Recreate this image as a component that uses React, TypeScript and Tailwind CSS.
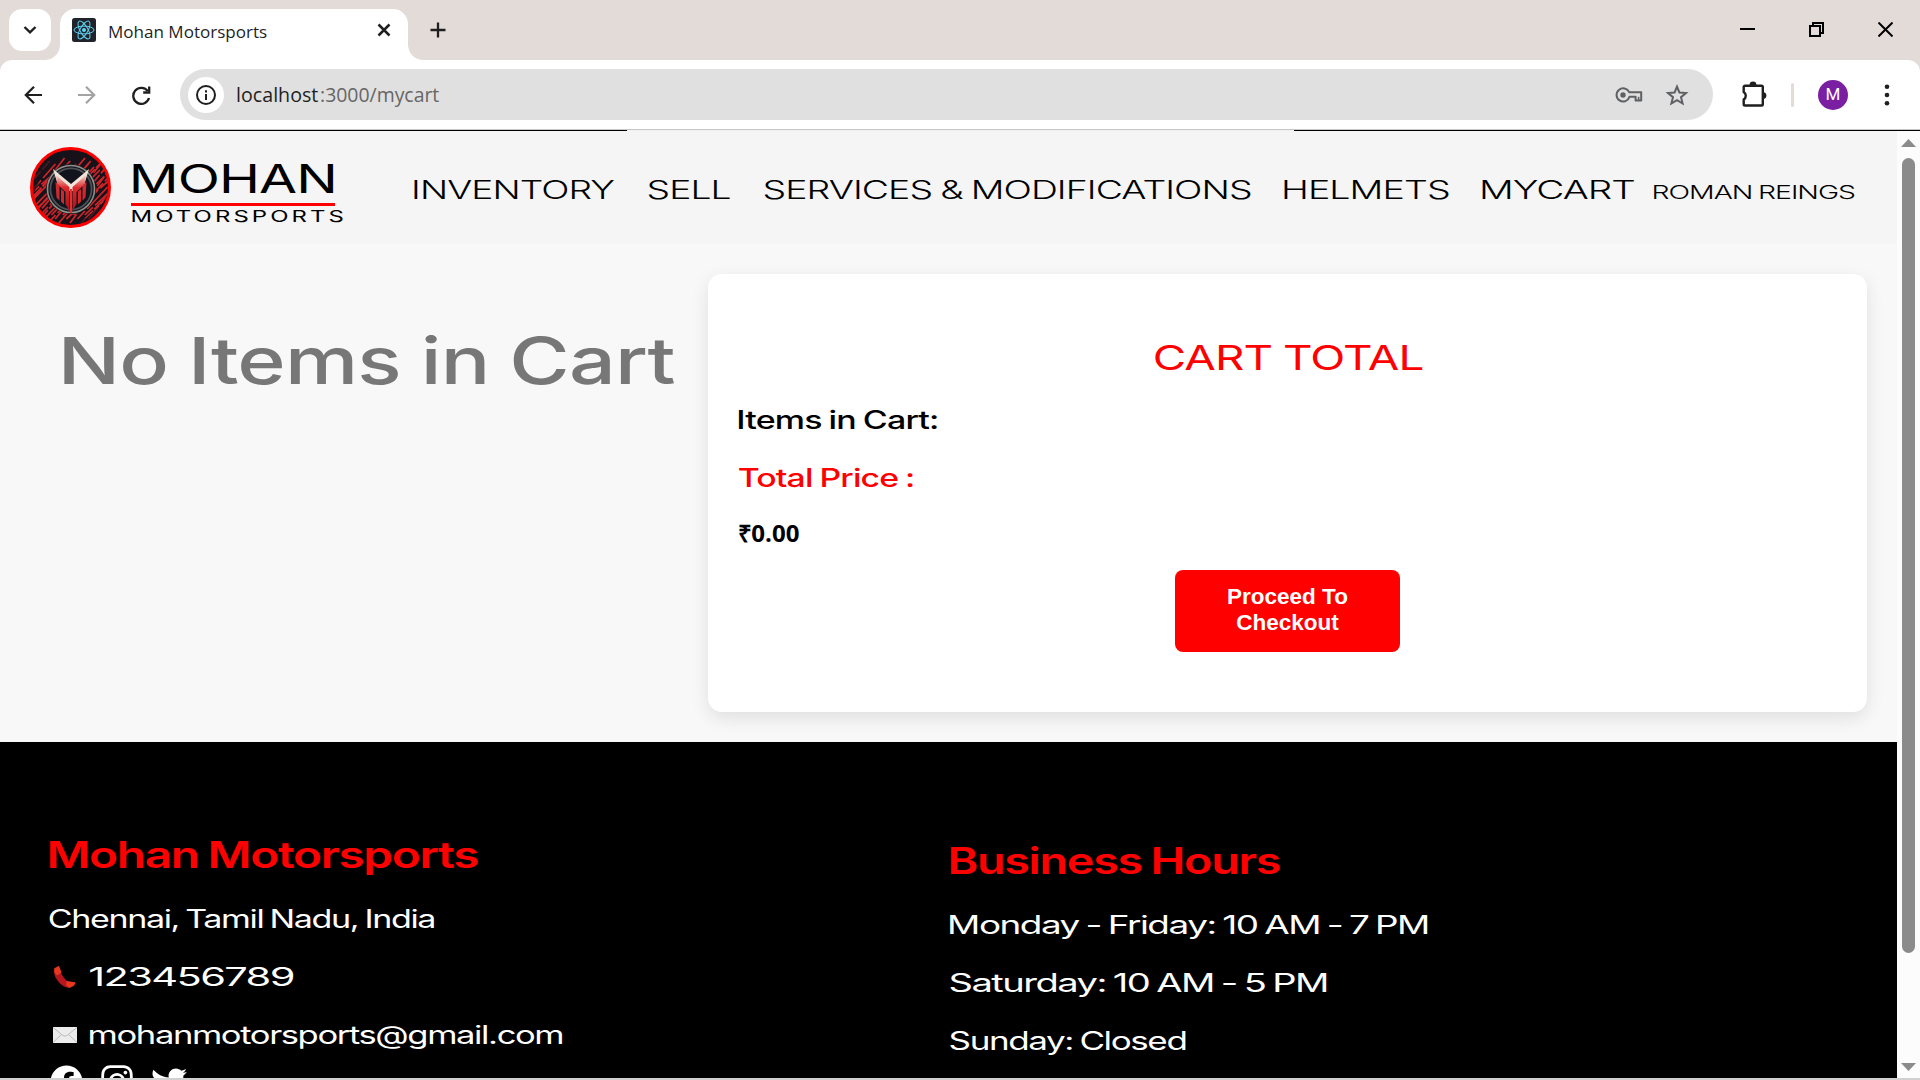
import { useLayoutEffect, useRef, useState } from "react";
import { FaFacebook, FaInstagram, FaTwitter } from "react-icons/fa";

/* Text stretched horizontally so that its ink fills the width of its box. */
function Wide({ text, box, className }: { text: string; box: string; className?: string }) {
  const outer = useRef<HTMLSpanElement>(null);
  const [transform, setTransform] = useState("none");
  useLayoutEffect(() => {
    const el = outer.current;
    const ctx = document.createElement("canvas").getContext("2d");
    if (!el || !ctx) return;
    const cs = getComputedStyle(el);
    ctx.font = `${cs.fontWeight} ${cs.fontSize} ${cs.fontFamily}`;
    if (cs.letterSpacing !== "normal") ctx.letterSpacing = cs.letterSpacing;
    ctx.wordSpacing = cs.wordSpacing;
    const m = ctx.measureText(text);
    const ink = m.actualBoundingBoxRight + m.actualBoundingBoxLeft;
    const k = (el.clientWidth - 1) / ink;
    setTransform(`translateX(${m.actualBoundingBoxLeft * k + 1}px) scaleX(${k})`);
  }, [text]);
  return (
    <span ref={outer} className={`block shrink-0 whitespace-nowrap ${box} ${className ?? ""}`}>
      <span className="inline-block origin-left align-top" style={{ transform }}>
        {text}
      </span>
    </span>
  );
}

function ReactMark() {
  return (
    <svg viewBox="0 0 24 24" className="size-6 shrink-0">
      <rect width="24" height="24" rx="2.5" fill="#20232a" />
      <g fill="none" stroke="#5ed3f3" strokeWidth="1">
        <ellipse cx="12" cy="12" rx="10" ry="3.9" />
        <ellipse cx="12" cy="12" rx="10" ry="3.9" transform="rotate(60 12 12)" />
        <ellipse cx="12" cy="12" rx="10" ry="3.9" transform="rotate(120 12 12)" />
      </g>
      <circle cx="12" cy="12" r="2" fill="#5ed3f3" />
    </svg>
  );
}

function TabStrip() {
  return (
    <div className="flex h-[60px] items-start bg-[#e3dbd8] pt-[9px]">
      <div className="ml-[9px] flex size-[42px] items-center justify-center rounded-[13px] bg-white">
        <svg width="14" height="10" viewBox="0 0 14 10" fill="none" stroke="#1f1f1f" strokeWidth="2.4">
          <path d="M1.5 2 7 7.4 12.5 2" />
        </svg>
      </div>
      <div className="relative ml-[9px] flex h-[51px] w-[348px] items-start rounded-t-[15px] bg-white pl-3">
        <span className="absolute bottom-0 left-[-15px] size-[15px] bg-[radial-gradient(circle_at_0_0,transparent_14.5px,#fff_15.2px)]" />
        <span className="absolute right-[-15px] bottom-0 size-[15px] bg-[radial-gradient(circle_at_100%_0,transparent_14.5px,#fff_15.2px)]" />
        <div className="mt-[9px]"><ReactMark /></div>
        <Wide text="Mohan Motorsports" box="w-[159px] ml-[12px]" className="mt-[9px] font-['Open_Sans'] text-[17px]/[28px] text-[#1f1f1f]" />
        <svg width="14" height="14" viewBox="0 0 14 14" className="mt-[14px] ml-[110px]" stroke="#1f1f1f" strokeWidth="2.5">
          <path d="M1.5 1.5l11 11M12.5 1.5l-11 11" />
        </svg>
      </div>
      <svg width="16" height="16" viewBox="0 0 16 16" className="mt-[13px] ml-[22px]" stroke="#1f1f1f" strokeWidth="2.3">
        <path d="M8 .5v15M.5 8h15" />
      </svg>
      <div className="ml-auto flex gap-[54px] pt-[13px] pr-[27px]">
        <svg width="15" height="15" viewBox="0 0 15 15" stroke="#000" strokeWidth="2"><path d="M0 7h15" /></svg>
        <svg width="15" height="15" viewBox="0 0 15 15" fill="none" stroke="#000" strokeWidth="2">
          <path d="M1 4h10v10H1zM4 4V1h10v10h-3" />
        </svg>
        <svg width="15" height="15" viewBox="0 0 15 15" stroke="#000" strokeWidth="2"><path d="M.5.5l14 14M14.5.5l-14 14" /></svg>
      </div>
    </div>
  );
}

function Toolbar() {
  return (
    <div className="h-[69px] bg-[#e3dbd8]">
      <div className="flex h-full items-center rounded-t-[12px] bg-white">
        <svg width="18" height="18" viewBox="0 0 18 18" className="mt-[1px] ml-[24px]" fill="none" stroke="#1f1f1f" strokeWidth="2.2">
          <path d="M18 9H2M10 .8 1.8 9l8.2 8.2" />
        </svg>
        <svg width="18" height="18" viewBox="0 0 18 18" className="mt-[1px] ml-[36px]" fill="none" stroke="#a3a3a3" strokeWidth="2.2">
          <path d="M0 9h16M8 .8 16.2 9 8 17.2" />
        </svg>
        <svg width="19" height="19" viewBox="0 0 19 19" className="mt-[1px] ml-[36px]" fill="none" stroke="#1f1f1f" strokeWidth="2.3">
          <path d="M15.8 5.2A8 8 0 1 0 17 12" />
          <path d="M17.2.5v6h-6" />
        </svg>
        <div className="ml-[29px] flex h-[51px] w-[1533px] items-center rounded-full bg-[#e0e0e0]">
          <div className="ml-[8px] flex size-9 items-center justify-center rounded-full bg-white">
            <svg width="20" height="20" viewBox="0 0 20 20" fill="none" stroke="#1f1f1f" strokeWidth="2">
              <circle cx="10" cy="10" r="9" />
              <path d="M10 9v6M10 5.2v2.2" />
            </svg>
          </div>
          <Wide text="localhost" box="w-[82px] ml-[12px]" className="mb-[1px] font-['Open_Sans'] text-[20.5px]/[30px] text-[#1f1f1f]" />
          <Wide text=":3000/mycart" box="w-[119px] ml-[2px]" className="mb-[1px] font-['Open_Sans'] text-[20.5px]/[30px] text-[#666]" />
          <svg width="28" height="18" viewBox="0 0 28 18" className="ml-auto" fill="none" stroke="#5f6063" strokeWidth="2">
            <path d="M14.2 6.2H26.2V14.6H20.6V10.8H14.5A6.6 6.6 0 1 1 14.2 6.2Z" strokeLinejoin="round" />
            <path d="M23.6 14V10.8" strokeWidth="1.6" />
            <circle cx="8" cy="9" r="2.7" fill="#5f6063" stroke="none" />
          </svg>
          <svg width="24" height="24" viewBox="0 0 24 24" className="mr-[24px] ml-[22px]" fill="none" stroke="#5f6063" strokeWidth="2">
            <path d="M12 3.6l2.4 5.9 6.6.5-5 4.2 1.6 6.3-5.600-3.400-5.600 3.400L8 14.200 3 10l6.600-.5z" />
          </svg>
        </div>
        <svg width="26" height="26" viewBox="0 0 26 26" className="mb-[2px] ml-[28px]" fill="none" stroke="#1f1f1f" strokeWidth="2.4">
          <path d="M4 4.7h16.5a1.3 1.3 0 0 1 1.3 1.3v17.2a1.3 1.3 0 0 1-1.3 1.3H4a1.3 1.3 0 0 1-1.3-1.3v-4.6a4.5 4.5 0 0 0 0-7.6V6A1.3 1.3 0 0 1 4 4.700z" />
          <path d="M8.600 4a3.400 3.400 0 0 1 6.800 0zM22 11.200a3.400 3.400 0 0 1 0 6.800z" fill="#1f1f1f" stroke="none" />
        </svg>
        <span className="ml-[24px] h-6 w-[3px] rounded-full bg-[#e3dbd8]" />
        <span className="ml-[24px] flex size-[30px] items-center justify-center rounded-full bg-[#7b1fa2] font-[Roboto] text-[17px] text-white">M</span>
        <svg width="6" height="22" viewBox="0 0 6 22" className="ml-[36px]" fill="#1f1f1f">
          <circle cx="3" cy="2.800" r="2.300" /><circle cx="3" cy="11" r="2.300" /><circle cx="3" cy="19.200" r="2.300" />
        </svg>
      </div>
    </div>
  );
}

const slashes = Array.from({ length: 34 }, (_, i) => i);

function Emblem() {
  return (
    <svg width="81" height="81" viewBox="0 0 81 81" className="shrink-0">
      <defs>
        <clipPath id="disc"><circle cx="40.500" cy="40.500" r="38" /></clipPath>
        <linearGradient id="wing" x1="0" y1="0" x2="0" y2="1">
          <stop offset="0" stopColor="#f4d9cf" /><stop offset=".35" stopColor="#dc2a2e" /><stop offset="1" stopColor="#a5131b" />
        </linearGradient>
      </defs>
      <circle cx="40.500" cy="40.500" r="39" fill="#17121a" />
      <g clipPath="url(#disc)">
        <g stroke="#cf2529" strokeWidth="1.700">
          {slashes.map((i) => (
            <path
              key={i}
              d={`M${i * 3.700 - 34} ${68 + (i % 3) * 4}L${i * 3.700 + 14 + (i % 4) * 2} ${11 + (i % 5) * 3}`}
              strokeDasharray={i % 2 ? "17 2 24 3" : "11 3 30 2"}
            />
          ))}
        </g>
        <path d="M0 0h42L26 12 12 28 4 46H0zM81 81H36l20-10 16-14 9-16z" fill="#14121b" opacity=".7" />
      </g>
      <circle cx="41" cy="42" r="25" fill="#14161f" />
      <circle cx="41" cy="42" r="23.500" fill="none" stroke="#8f9088" strokeWidth="1.600" />
      <circle cx="41" cy="42" r="20.600" fill="#11131d" stroke="#4c5255" strokeWidth="1.800" />
      <path d="M23 22l18 15 18-15-3.500 11.500L43.500 44h-5L26.500 33.500z" fill="#f1e4d8" />
      <path d="M26 28l13.500 12v24l-4-7V45l-8.500-8z" fill="url(#wing)" />
      <path d="M56 28L42.500 40v24l4-7V45l8.500-8z" fill="url(#wing)" />
      <path d="M41 42v24" stroke="#e5322f" strokeWidth="2" />
      <path d="M25.500 35l4 3.500v15l-3-3zM31 42l3 2.500v13l-3-3zM56.500 35l-4 3.500v15l3-3zM51 42l-3 2.500v13l3-3z" fill="#d0292d" />
      <circle cx="40.500" cy="40.500" r="39" fill="none" stroke="#f00" strokeWidth="3" />
    </svg>
  );
}

function SiteHeader() {
  return (
    <header className="flex h-[113px] bg-[#f5f5f5] pt-4 pl-[30px] tracking-[-0.04em] text-black">
      <Emblem />
      <div className="ml-5 pt-[11px]">
        <Wide text="MOHAN" box="w-[201px] ml-[1px]" className="text-[39px]/[41px]" />
        <div className="mt-[4px] h-[3px] w-[204px] bg-[#f00]" />
        <Wide text="MOTORSPORTS" box="w-[213px]" className="mt-[1px] text-[15.500px]/[20px] tracking-[2px]" />
      </div>
      <nav className="flex pt-[28px] text-[25.500px]/[30px] font-light [word-spacing:-1px]">
        <Wide text="INVENTORY" box="w-[202px] ml-[69px]" />
        <Wide text="SELL" box="w-[84px] ml-[32px]" />
        <Wide text="SERVICES & MODIFICATIONS" box="w-[488px] ml-[32px]" />
        <Wide text="HELMETS" box="w-[166px] ml-[32px]" />
        <Wide text="MYCART" box="w-[153px] ml-[32px]" />
        <Wide text="ROMAN REINGS" box="w-[203px] ml-[18px]" className="pt-[2px] text-[18.500px]" />
      </nav>
    </header>
  );
}

function CartPage() {
  return (
    <main className="flex h-[498px] bg-[#f8f8f8] pt-[30px] tracking-[-0.04em] [word-spacing:-0.06em]">
      <Wide text="No Items in Cart" box="w-[611px] ml-[63px]" className="mt-[47px] text-[65px]/[80px] font-medium text-[#777]" />
      <section className="ml-[34px] flex h-[438px] w-[1159px] flex-col rounded-[14px] bg-white px-[30px] shadow-[0_6px_18px_rgba(0,0,0,0.1)]">
        <Wide text="CART TOTAL" box="w-[270px] mx-auto" className="mt-[64px] text-[33.500px]/[40px] text-[#f00]" />
        <Wide text="Items in Cart:" box="w-[199px]" className="mt-[27px] text-[25.500px]/[30px] font-medium text-black" />
        <Wide text="Total Price :" box="w-[175px]" className="mt-[28px] text-[25.500px]/[30px] font-medium text-[#f00]" />
        <Wide text="₹0.00" box="w-[61px]" className="mt-[25px] font-['Open_Sans'] text-[23.500px]/[30px] font-bold tracking-normal text-black" />
        <button className="mx-auto mt-[22px] h-[82px] w-[225px] rounded-[8px] bg-[#f00] px-10 pb-[2px] font-['Liberation_Sans'] text-[22.500px]/[26px] font-bold tracking-normal text-white [word-spacing:0]">
          Proceed To Checkout
        </button>
      </section>
    </main>
  );
}

function PhoneGlyph() {
  return (
    <svg width="24" height="24" viewBox="0 0 24 24">
      <path d="M2 2.500C.5 5 .5 9 3.500 14s9 9.500 14 9l1-5c-3 0-8-4.500-10.500-10z" fill="#b3161d" />
      <path d="M1.500 3.200L6 .8l2.500 6.700L4 10.500C1.500 8 .7 5.500 1.500 3.200z" fill="#e8371f" />
      <path d="M13.500 16l9 1.300c-.3 3-3 5-6.500 5.200l-3-2.500z" fill="#e8371f" />
    </svg>
  );
}

function MailGlyph() {
  return (
    <svg width="24" height="16" viewBox="0 0 24 16" fill="none">
      <path d="M0 0h24v16H0z" fill="#ececec" />
      <path d="M0 .5l10 8q2 1.300 4 0l10-8M0 15.500L8.500 7.500M24 15.500L15.500 7.500" stroke="#bdbdbd" />
    </svg>
  );
}

function SiteFooter() {
  return (
    <footer className="flex h-[336px] overflow-hidden bg-black text-[25px]/[30px] tracking-[-0.04em] text-white [word-spacing:-0.06em]">
      <div className="w-[949px] shrink-0 pl-[48px]">
        <Wide text="Mohan Motorsports" box="w-[430px]" className="mt-[93px] text-[36.500px]/[40px] font-semibold text-[#f00]" />
        <Wide text="Chennai, Tamil Nadu, India" box="w-[387px]" className="mt-[29px]" />
        <div className="mt-[28px] flex items-center">
          <span className="ml-[5px] w-[36px]"><PhoneGlyph /></span>
          <Wide text="123456789" box="w-[204px]" />
        </div>
        <div className="mt-[28px] flex items-center">
          <span className="ml-[5px] w-[35px]"><MailGlyph /></span>
          <Wide text="mohanmotorsports@gmail.com" box="w-[474px]" />
        </div>
        <div className="mt-[15px] ml-[2px] flex gap-4">
          <FaFacebook size={33} />
          <FaInstagram size={36} className="-mt-0.5" />
          <FaTwitter size={36} />
        </div>
      </div>
      <div>
        <Wide text="Business Hours" box="w-[331px]" className="mt-[99px] text-[36.500px]/[40px] font-semibold text-[#f00]" />
        <Wide text="Monday - Friday: 10 AM - 7 PM" box="w-[479px]" className="mt-[29px]" />
        <Wide text="Saturday: 10 AM - 5 PM" box="w-[378px]" className="mt-[28px]" />
        <Wide text="Sunday: Closed" box="w-[237px]" className="mt-[28px]" />
      </div>
    </footer>
  );
}

function Scrollbar() {
  return (
    <div className="flex w-[23px] flex-col items-center bg-[#fcfcfc] pt-2">
      <svg width="15" height="8" viewBox="0 0 15 8" fill="#8b8b8b"><path d="M7.500 0L15 8H0z" /></svg>
      <div className="mt-[11px] h-[795px] w-[13px] rounded-full bg-[#8b8b8b]" />
      <svg width="15" height="8" viewBox="0 0 15 8" className="mt-auto mb-[7px]" fill="#8b8b8b"><path d="M0 0h15L7.500 8z" /></svg>
    </div>
  );
}

export default function App() {
  return (
    <div className="flex h-[1080px] w-[1920px] flex-col overflow-hidden bg-white font-[Inter,sans-serif]">
      <TabStrip />
      <Toolbar />
      <div className="h-px bg-[#c8c8c8]" />
      <div className="flex h-px justify-between bg-[#f0f0f0]">
        <span className="h-px w-[627px] bg-black" />
        <span className="h-px w-[626px] bg-black" />
      </div>
      <div className="flex h-[947px]">
        <div className="w-[1897px]">
          <SiteHeader />
          <CartPage />
          <SiteFooter />
        </div>
        <Scrollbar />
      </div>
      <div className="h-0.5 bg-[#d0d0d0]" />
    </div>
  );
}
